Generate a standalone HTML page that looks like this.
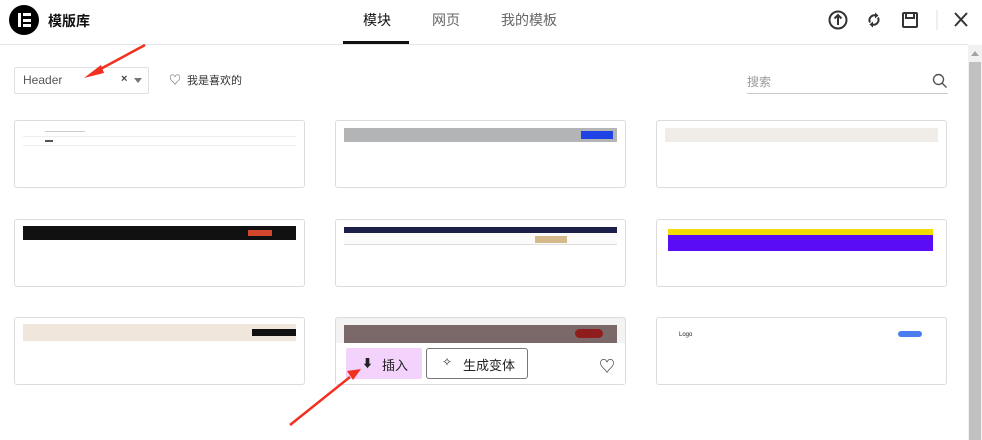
<!DOCTYPE html>
<html><head><meta charset="utf-8"><style>
*{margin:0;padding:0;box-sizing:border-box}
body{width:982px;height:440px;overflow:hidden;background:#fff;font-family:"Liberation Sans","Noto Sans CJK SC",sans-serif;position:relative;color:#333}
.a{position:absolute}
.card{position:absolute;width:291px;height:68px;border:1px solid #dcdcdc;border-radius:3px;background:#fff}
</style></head><body>
<div class="a" style="left:9px;top:5px;width:30px;height:30px;border-radius:50%;background:#000"></div>
<div class="a" style="left:18px;top:13px;width:3px;height:14px;background:#fff"></div>
<div class="a" style="left:23px;top:13px;width:8px;height:3px;background:#fff"></div>
<div class="a" style="left:23px;top:18.5px;width:8px;height:3px;background:#fff"></div>
<div class="a" style="left:23px;top:24px;width:8px;height:3px;background:#fff"></div>
<div class="a" style="left:48px;top:11px;font-size:14px;font-weight:bold;color:#111">模版库</div>
<div class="a" style="left:363px;top:10px;font-size:14px;color:#111">模块</div>
<div class="a" style="left:432px;top:10px;font-size:14px;color:#666">网页</div>
<div class="a" style="left:501px;top:10px;font-size:14px;color:#666">我的模板</div>
<div class="a" style="left:343px;top:41px;width:66px;height:4px;background:#111"></div>
<div class="a" style="left:0;top:44px;width:968px;height:1px;background:#e4e4e4"></div>
<svg class="a" style="left:826px;top:8px" width="150" height="24" viewBox="0 0 150 24" fill="none" stroke="#333" stroke-width="2">
<circle cx="12" cy="12" r="8.5"/><path d="M12 17V7M8.5 10.5L12 7l3.5 3.5"/>
<path d="M44 14.5A5 5 0 0 1 50 7.5"/><path d="M52 9.5A5 5 0 0 1 46 16.5"/>
<path d="M49 4.5l3.5 3-3.5 3z M47 13.5l-3.5 3 3.5 3z" fill="#333" stroke="none"/>
<rect x="77" y="5" width="14" height="14" rx="1"/><path d="M80 5v5h8V5"/>
<path d="M111 2v20" stroke="#ddd" stroke-width="1"/>
<path d="M141 5l-12 13M129 5l12 13"/>
</svg>
<div class="a" style="left:968px;top:45px;width:14px;height:395px;background:#f1f1f1"></div>
<div class="a" style="left:969px;top:62px;width:12px;height:378px;background:#c1c1c1"></div>
<div class="a" style="left:971px;top:51px;width:0;height:0;border-left:4px solid transparent;border-right:4px solid transparent;border-bottom:5px solid #a3a3a3"></div>
<div class="a" style="left:14px;top:67px;width:135px;height:27px;border:1px solid #e0e0e0;border-radius:2px"></div>
<div class="a" style="left:23px;top:73px;font-size:12px;color:#555">Header</div>
<div class="a" style="left:121px;top:73px;font-size:11px;color:#444;font-weight:bold">×</div>
<div class="a" style="left:134px;top:78px;width:0;height:0;border-left:4px solid transparent;border-right:4px solid transparent;border-top:5px solid #777"></div>
<div class="a" style="left:169px;top:71px;font-size:12px;color:#555">♡</div>
<div class="a" style="left:187px;top:72px;font-size:11px;color:#333">我是喜欢的</div>
<div class="a" style="left:747px;top:73px;font-size:12px;color:#999">搜索</div>
<div class="a" style="left:747px;top:93px;width:201px;height:1px;background:#ccc"></div>
<svg class="a" style="left:932px;top:73px" width="16" height="16" fill="none" stroke="#555" stroke-width="1.4"><circle cx="6.5" cy="6.5" r="5"/><path d="M10 10l4.5 4.5"/></svg>
<div class="card" style="left:14px;top:120px"></div>
<div class="a" style="left:23px;top:128px;width:273px;height:18px;background:#fff;border-bottom:1px solid #eee"></div>
<div class="a" style="left:45px;top:131px;width:40px;height:1px;background:#ccc"></div>
<div class="a" style="left:23px;top:136px;width:273px;height:1px;background:#eee"></div>
<div class="a" style="left:45px;top:140px;width:8px;height:2px;background:#555"></div>
<div class="card" style="left:335px;top:120px"></div>
<div class="a" style="left:344px;top:128px;width:273px;height:14px;background:#b2b4b5"></div>
<div class="a" style="left:581px;top:131px;width:32px;height:8px;background:#1f43e5"></div>
<div class="card" style="left:656px;top:120px"></div>
<div class="a" style="left:665px;top:128px;width:273px;height:14px;background:#f0ece8"></div>
<div class="card" style="left:14px;top:219px"></div>
<div class="a" style="left:23px;top:226px;width:273px;height:14px;background:#111"></div>
<div class="a" style="left:248px;top:230px;width:24px;height:6px;background:#d2472b"></div>
<div class="card" style="left:335px;top:219px"></div>
<div class="a" style="left:344px;top:227px;width:273px;height:6px;background:#1c1f4a"></div>
<div class="a" style="left:344px;top:233px;width:273px;height:12px;background:#fbfbfb;border-bottom:1px solid #ddd"></div>
<div class="a" style="left:535px;top:236px;width:32px;height:7px;background:#d6b98b"></div>
<div class="card" style="left:656px;top:219px"></div>
<div class="a" style="left:668px;top:229px;width:265px;height:6px;background:#f4dc00"></div>
<div class="a" style="left:668px;top:235px;width:265px;height:16px;background:#5a0cf4"></div>
<div class="card" style="left:14px;top:317px"></div>
<div class="a" style="left:23px;top:324px;width:273px;height:17px;background:#f0e6dc"></div>
<div class="a" style="left:252px;top:329px;width:44px;height:7px;background:#111"></div>
<div class="card" style="left:335px;top:317px;height:68px;background:#f3f3f3"></div>
<div class="a" style="left:344px;top:325px;width:273px;height:18px;background:#7b6868"></div>
<div class="a" style="left:575px;top:329px;width:28px;height:9px;border-radius:5px;background:#8f1d1d"></div>
<div class="a" style="left:336px;top:343px;width:289px;height:41px;background:#fff"></div>
<div class="a" style="left:346px;top:348px;width:76px;height:31px;background:#f3d3fb;border-radius:2px"></div>
<div class="a" style="left:362px;top:355px;font-size:11px;color:#222">⬇</div>
<div class="a" style="left:382px;top:355px;font-size:13px;color:#222">插入</div>
<div class="a" style="left:426px;top:348px;width:102px;height:31px;border:1px solid #777;border-radius:3px"></div>
<div class="a" style="left:442px;top:355px;font-size:12px;color:#333">✧</div>
<div class="a" style="left:463px;top:355px;font-size:13px;color:#222">生成变体</div>
<div class="a" style="left:599px;top:353px;font-size:16px;color:#333">♡</div>
<div class="card" style="left:656px;top:317px"></div>
<div class="a" style="left:679px;top:332px;font-size:6px;color:#222">Logo</div>
<div class="a" style="left:898px;top:331px;width:24px;height:6px;border-radius:3px;background:#4a7df0"></div>
<svg class="a" style="left:0;top:0" width="982" height="440">
<path d="M145 45L95 72" stroke="#f2301f" stroke-width="2.5"/><path d="M84 78l17-13 3 8z" fill="#f2301f"/>
<path d="M290 425L350 377" stroke="#f2301f" stroke-width="2.5"/><path d="M361 369l-14 2 6 9z" fill="#f2301f"/>
</svg>
</body></html>
